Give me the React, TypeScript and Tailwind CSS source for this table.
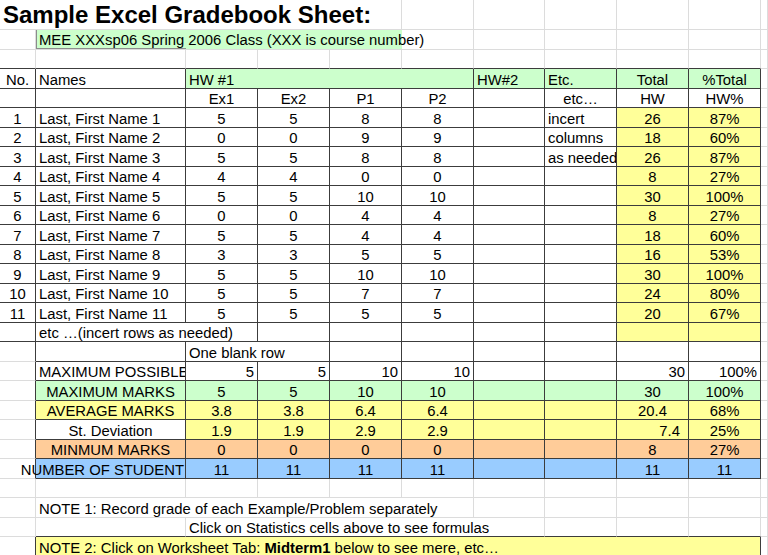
import type { ReactNode } from "react";

type Cell = {
  t?: ReactNode;
  span?: number;
  bg?: string;
  a?: "l" | "c" | "r";
  cls?: string;
  clip?: boolean;
};

const G = "bg-[#ccffcc]";
const Y = "bg-[#ffff99]";
const O = "bg-[#ffcc99]";
const B = "bg-[#99ccff]";

const SPAN: Record<number, string> = {
  1: "col-span-1",
  2: "col-span-2",
  4: "col-span-4",
  5: "col-span-5",
  9: "col-span-9",
};

const ALIGN = { l: "justify-start", c: "justify-center", r: "justify-end" };

const blank = (n: number): Cell[] => Array.from({ length: n }, () => ({}));

const students: [number, number, number, number, string, number, string][] = [
  [5, 5, 8, 8, "incert", 26, "87%"],
  [0, 0, 9, 9, "columns", 18, "60%"],
  [5, 5, 8, 8, "as needed", 26, "87%"],
  [4, 4, 0, 0, "", 8, "27%"],
  [5, 5, 10, 10, "", 30, "100%"],
  [0, 0, 4, 4, "", 8, "27%"],
  [5, 5, 4, 4, "", 18, "60%"],
  [3, 3, 5, 5, "", 16, "53%"],
  [5, 5, 10, 10, "", 30, "100%"],
  [5, 5, 7, 7, "", 24, "80%"],
  [5, 5, 5, 5, "", 20, "67%"],
];

function statRow(
  label: ReactNode,
  vals: (string | number)[],
  tot: string | number,
  pct: string,
  bg: string,
  labelBg: string,
  labelCell: Partial<Cell> = {},
  totCell: Partial<Cell> = {},
): Cell[] {
  return [
    {},
    { t: label, a: "c", bg: labelBg, ...labelCell },
    ...vals.map((v) => ({ t: v, a: "c" as const, bg })),
    { bg },
    { bg },
    { t: tot, a: "c", bg, ...totCell },
    { t: pct, a: "c", bg },
    {},
  ];
}

const rows: Cell[][] = [
  [
    { t: "Sample Excel Gradebook Sheet:", span: 5, cls: "text-[24px] font-bold leading-[30px] pl-[3px]" },
    ...blank(6),
  ],
  [{}, { t: "mee", span: 5, cls: "p-0" }, ...blank(5)],
  blank(11),
  [
    { t: "No.", a: "c" },
    { t: "Names" },
    { t: "HW #1", span: 4, bg: G },
    { t: "HW#2", bg: G },
    { t: "Etc.", bg: G },
    { t: "Total", a: "c", bg: G },
    { t: "%Total", a: "c", bg: G },
    {},
  ],
  [
    {},
    {},
    { t: "Ex1", a: "c" },
    { t: "Ex2", a: "c" },
    { t: "P1", a: "c" },
    { t: "P2", a: "c" },
    {},
    { t: "etc…", a: "c" },
    { t: "HW", a: "c" },
    { t: "HW%", a: "c" },
    {},
  ],
  ...students.map(([e1, e2, p1, p2, etc, tot, pct], i): Cell[] => [
    { t: i + 1, a: "c" },
    { t: `Last, First Name ${i + 1}` },
    { t: e1, a: "c" },
    { t: e2, a: "c" },
    { t: p1, a: "c" },
    { t: p2, a: "c" },
    {},
    { t: etc, clip: true },
    { t: tot, a: "c", bg: Y },
    { t: pct, a: "c", bg: Y },
    {},
  ]),
  [{}, { t: "etc …(incert rows as needed)", span: 2 }, ...blank(5), { bg: Y }, { bg: Y }, {}],
  [{}, {}, { t: "One blank row", span: 2 }, ...blank(7)],
  [
    {},
    { t: "MAXIMUM POSSIBLE", clip: true },
    { t: 5, a: "r" },
    { t: 5, a: "r" },
    { t: 10, a: "r" },
    { t: 10, a: "r" },
    {},
    {},
    { t: 30, a: "r" },
    { t: "100%", a: "r" },
    {},
  ],
  statRow("MAXIMUM MARKS", [5, 5, 10, 10], 30, "100%", G, G),
  statRow("AVERAGE MARKS", ["3.8", "3.8", "6.4", "6.4"], "20.4", "68%", Y, Y),
  statRow("St. Deviation", ["1.9", "1.9", "2.9", "2.9"], "7.4", "25%", Y, "", {}, { a: "r", cls: "pr-[8px] pt-[1.5px] leading-[18px]" }),
  statRow("MINMUM MARKS", [0, 0, 0, 0], 8, "27%", O, O),
  statRow("NUMBER OF STUDENT", [11, 11, 11, 11], 11, "11", B, B, { a: "r", cls: "pr-[1px] pt-[1.5px] leading-[18px]" }),
  blank(11),
  [{}, { t: "NOTE 1: Record grade of each Example/Problem separately", span: 5 }, ...blank(5)],
  [{}, {}, { t: "Click on Statistics cells above to see formulas", span: 5 }, ...blank(4)],
  [
    {},
    {
      t: (
        <span>
          NOTE 2: Click on Worksheet Tab: <b className="font-bold">Midterm1</b> below to see mere, etc…
        </span>
      ),
      span: 9,
      bg: Y,
    },
    {},
  ],
];

// dark-ruled table area, everything else shows plain sheet gridlines
function boxed(r: number, c: number) {
  if (c > 9) return false;
  if (r >= 3 && r <= 16) return true;
  if (r >= 17 && r <= 23) return c >= 1;
  if (r === 27) return c >= 1;
  return false;
}

function MeeCell() {
  return (
    <div className="h-full w-[366px] bg-[#ccffcc] flex">
      <div className="w-[150px] h-full border-l border-b border-[#8c8c8c] pl-[2px] pt-[1.5px] leading-[17px] whitespace-nowrap">
        MEE XXXsp06 Spring 2006 Class (XXX is course number)
      </div>
    </div>
  );
}

export default function App() {
  return (
    <div className="w-[768px] h-[555px] overflow-hidden bg-white text-black font-['Liberation_Sans',Arial,sans-serif] text-[14.85px]">
      <div className="grid grid-cols-[36px_150px_72px_72px_72px_72px_71px_72px_72px_72px_1fr] grid-rows-[30px_repeat(27,19.5px)]">
        {rows.map((row, r) => {
          let c = 0;
          return row.map((cell, i) => {
            const span = cell.span ?? 1;
            const start = c;
            const end = c + span - 1;
            c = end + 1;
            const darkR = boxed(r, end) || boxed(r, end + 1);
            const darkB = boxed(r, start) || boxed(r + 1, start);
            const text = cell.cls ?? "px-[3px] pt-[1.5px] leading-[18px]";
            return (
              <div
                key={`${r}-${i}`}
                className={[
                  "flex whitespace-nowrap border-r border-b",
                  darkR ? "border-r-[#3c3c3c]" : "border-r-[#dcdcdc]",
                  darkB ? "border-b-[#3c3c3c]" : "border-b-[#dcdcdc]",
                  SPAN[span],
                  ALIGN[cell.a ?? "l"],
                  cell.bg ?? "",
                  cell.clip ? "overflow-hidden" : "",
                  text,
                ].join(" ")}
              >
                {cell.t === "mee" ? <MeeCell /> : cell.t}
              </div>
            );
          });
        })}
      </div>
    </div>
  );
}
